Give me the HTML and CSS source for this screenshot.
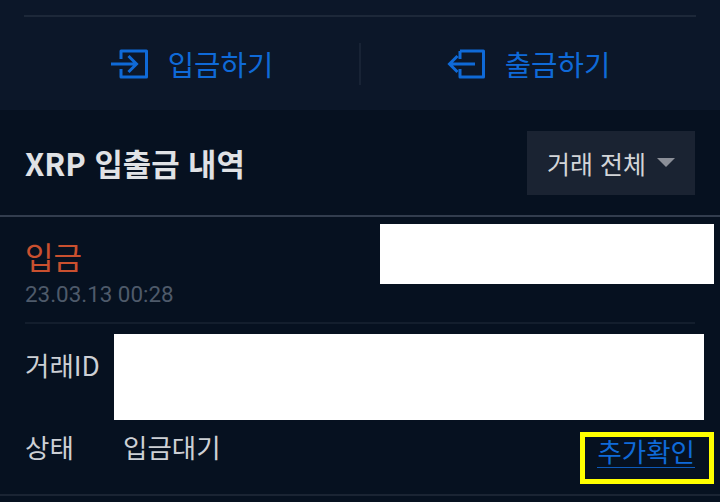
FILE: index.html
```html
<!DOCTYPE html>
<html lang="ko">
<head>
    <meta charset="utf-8">
    <title>XRP 입출금 내역</title>
    <link rel="stylesheet" href="styles.css">
</head>
<body>
    <div class="top">
        <div class="actions">
            <a class="action">
                <svg class="action-icon" viewBox="0 0 38 30" fill="none" stroke="#0f6ad8" stroke-width="3">
                    <path d="M11 10V2h25.500v26H11v-8" stroke-linejoin="round"/>
                    <path d="M1 15h25M18.500 7l8 8-8 8"/>
                </svg>
                입금하기
            </a>
            <span class="action-sep"></span>
            <a class="action">
                <svg class="action-icon" viewBox="0 0 38 30" fill="none" stroke="#0f6ad8" stroke-width="3">
                    <path d="M13 2h23.500v26H13v-8" stroke-linejoin="round"/>
                    <path d="M13 2v8M28 15H3M10.500 7l-8 8 8 8"/>
                </svg>
                출금하기
            </a>
        </div>
    </div>

    <div class="history">
        <div class="history-head">
            <h2>XRP 입출금 내역</h2>
            <div class="filter">거래 전체 <span class="caret"></span></div>
        </div>

        <div class="item">
            <div class="item-top">
                <div class="kind">입금</div>
                <div class="date">23.03.13 00:28</div>
            </div>
            <div class="row row-id">
                <span class="label">거래ID</span>
            </div>
            <div class="row row-status">
                <span class="label">상태</span>
                <span class="value">입금대기</span>
                <a class="more">추가확인</a>
            </div>
        </div>
    </div>

    <!-- 가림 처리 및 강조 표시 -->
    <div class="mask mask-amount"></div>
    <div class="mask mask-id"></div>
    <div class="highlight"></div>
</body>
</html>
```

FILE: styles.css
```css
/* 기본 스타일 */
html, body {
    height: 100%;
}
body {
    margin: 0;
    position: relative;
    overflow: hidden;
    background-color: #061120;
    font-family: "Noto Sans CJK KR", "Noto Sans", sans-serif;
}

/* 상단 입출금 버튼 */
.top {
    height: 110px;
    padding: 15px 24px 0;
    box-sizing: border-box;
    background-color: #0c1729;
}
.actions {
    height: 95px;
    display: flex;
    align-items: center;
    border-top: 2px solid #1d2839;
    box-sizing: border-box;
}
.action {
    flex: 1;
    display: flex;
    align-items: center;
    justify-content: center;
    gap: 20px;
    font-size: 28.700px;
    line-height: 36px;
    color: #0f6ad8;
}
.action-icon {
    width: 38px;
    height: 30px;
}
.action-sep {
    width: 2px;
    height: 42px;
    background-color: #182335;
}

/* 내역 헤더 */
.history-head {
    height: 105px;
    padding: 0 25px;
    display: flex;
    align-items: center;
    justify-content: space-between;
    border-bottom: 2px solid #323d4e;
}
h2 {
    margin: 0;
    font-size: 30.800px;
    font-weight: 700;
    color: #e0e2e5;
}
.filter {
    width: 168px;
    height: 64px;
    display: flex;
    align-items: center;
    justify-content: center;
    gap: 11px;
    background-color: #1a2332;
    color: #d3d5d8;
    font-size: 25px;
}
.caret {
    border-left: 9px solid transparent;
    border-right: 9px solid transparent;
    border-top: 9px solid #8b8f98;
}

/* 내역 항목 */
.item {
    padding: 0 25px;
    border-bottom: 2px solid #1a2433;
    height: 279px;
    box-sizing: border-box;
}
.item-top {
    height: 107px;
    padding-top: 19px;
    box-sizing: border-box;
    border-bottom: 2px solid #131e2d;
}
.kind {
    font-size: 31px;
    line-height: 40px;
    color: #c9502f;
}
.date {
    margin-top: 4px;
    font-family: Roboto, sans-serif;
    font-size: 22.400px;
    line-height: 28px;
    color: #4e5a6a;
}
.row {
    display: flex;
    align-items: center;
    font-size: 26.500px;
    line-height: 36px;
    color: #cdd0d5;
}
.row-id {
    padding-top: 22px;
    height: 60px;
    box-sizing: border-box;
}
.row-status {
    margin-top: 42px;
}
.label {
    width: 98px;
}
.more {
    margin-left: auto;
    margin-top: 8px;
    line-height: 33px;
    color: #0f6ad8;
    border-bottom: 1px solid #0d5ab8;
}

/* 가림 처리 */
.mask {
    position: absolute;
    background-color: #fff;
}
.mask-amount {
    left: 380px;
    top: 224px;
    width: 334px;
    height: 60px;
}
.mask-id {
    left: 114px;
    top: 334px;
    width: 590px;
    height: 86px;
}
.highlight {
    position: absolute;
    left: 580px;
    top: 432px;
    width: 134px;
    height: 52px;
    box-sizing: border-box;
    border: 5px solid #ffff00;
}
```
